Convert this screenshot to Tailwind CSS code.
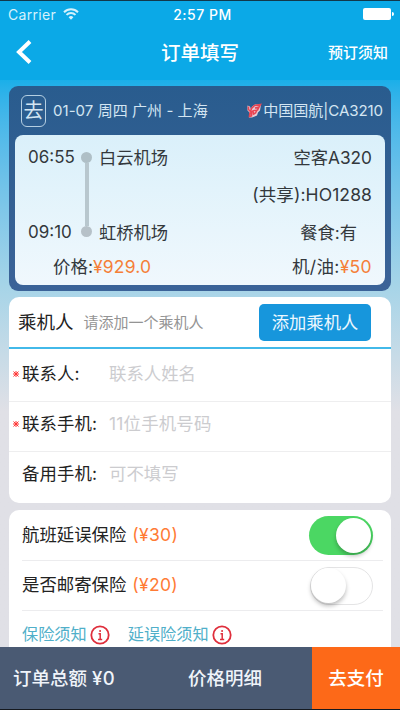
<!DOCTYPE html>
<html lang="zh-CN">
<head>
<meta charset="utf-8">
<title>订单填写</title>
<script src="https://cdn.jsdelivr.net/npm/@tailwindcss/browser@4"></script>
</head>
<body class="w-[400px] h-[710px] overflow-hidden font-['Inter','Noto_Sans_CJK_SC',sans-serif] text-[#33383c] whitespace-nowrap">
<div class="flex h-[710px] flex-col border-t border-b border-t-[#12384b] border-b-[#15191f] bg-linear-to-b from-[#18afe9] from-11% via-[#a5d4e8] via-40% to-[#e0e0e6] to-58%">
  <header class="h-[79px] shrink-0 bg-[#0ba9e7] text-white">
    <div class="grid h-[26px] grid-cols-3 items-center pl-2 pr-[6px] text-[14px]">
      <div class="flex items-center gap-[7px] text-[#d5f1fc]"><span class="tracking-[0.3px]">Carrier</span>
        <svg class="h-[12px] w-[16px]" viewBox="0 0 16 12" fill="none" stroke="currentColor" stroke-width="2"><path d="M1 4.2a10 10 0 0 1 14 0M3.5 6.9a6.4 6.4 0 0 1 9 0"/><path d="M5.6 9.2a3.5 3.5 0 0 1 4.8 0L8 11.7z" fill="currentColor" stroke="none"/></svg>
      </div>
      <div class="pl-[3px] text-center font-medium tracking-[0.5px]">2:57 PM</div>
      <div class="flex items-center justify-end gap-px"><span class="h-[12px] w-[28px] rounded-[2px] bg-white"></span><span class="h-[4px] w-[2px] rounded-r-full bg-white"></span></div>
    </div>
    <div class="grid h-[52px] grid-cols-3 items-center pl-4 pr-3">
      <svg class="-mt-[2px] h-[24px] w-[16px]" viewBox="0 0 16 24" fill="none" stroke="white" stroke-width="4"><path d="M14 1.5 3 12l11 10.500"/></svg>
      <h1 class="pr-[4px] pt-[1px] text-center text-[19.500px] font-medium">订单填写</h1>
      <span class="text-right text-[15px] font-medium">预订须知</span>
    </div>
  </header>

  <main class="min-h-0 flex-1 overflow-hidden px-[9px] pt-[6px]">
    <section class="h-[205px] rounded-[9px] bg-linear-to-b from-[#295c8e] to-[#3b6398] px-[6px]">
      <div class="flex h-[49px] items-center pl-[6px] pr-[2px] text-[15px] text-[#d3e5f2]">
        <span class="flex h-[32px] w-[25px] items-center justify-center rounded-[6px] border border-[#b5cfe2] text-[20px]">去</span>
        <span class="ml-[7px] pt-[1px] text-[15px] tracking-[0.050px]">01-07 周四 广州 - 上海</span>
        <svg class="ml-auto mr-[1px] h-[15px] w-[15px]" viewBox="0 0 15 15" fill="none"><path d="M0.500 2.500v5l2 2-.5 5h3l5-2 1-3 2-2 1-6-6 0-3 2-1 3-1-3z" fill="#e7cbd5"/><path d="M1.500 3.500v3l2 2 1-3 3-3 6-1-1.500 2.500-4 1 3.500 0-1 2-2.500.5 1.500.5-1 2-2 1-.5-3-1.500 1 0 4-2 .5.500-4" stroke="#e84553" stroke-width="1.600"/></svg>
        <span class="pt-[1px] text-[15.100px] tracking-[-0.100px]">中国国航|CA3210</span>
      </div>
      <div class="flex h-[150px] flex-col rounded-[8px] bg-linear-to-b from-[#daf0fa] to-[#f0f8fd] px-[13px] text-[17.300px]">
        <div class="flex h-[113px] pt-[7px]">
          <div class="flex h-[106px] w-[47px] flex-col justify-between text-[17px]"><span class="flex h-8 items-center">06:55</span><span class="flex h-8 items-center pt-[1px]">09:10</span></div>
          <div class="ml-[6px] mt-[10px] flex h-[85px] w-[11px] flex-col items-center"><span class="size-[11px] rounded-full bg-[#afbfc6]"></span><span class="w-1 flex-1 bg-[#b8c7ce]"></span><span class="size-[11px] rounded-full bg-[#b6c1c8]"></span></div>
          <div class="ml-[7px] flex h-[106px] flex-col justify-between"><span class="flex h-8 items-center">白云机场</span><span class="flex h-8 items-center pt-[1px]">虹桥机场</span></div>
          <div class="ml-auto flex h-[106px] flex-col items-end justify-between"><span class="flex h-8 items-center">空客A320</span><span class="flex h-8 items-center text-[17.500px] tracking-[0.100px]">(共享):HO1288</span><span class="flex h-8 items-center pr-[15px] pt-[1px]">餐食:有</span></div>
        </div>
        <div class="flex h-[37px] items-center justify-between pl-[25px] pt-[1px] text-[17.500px]"><span>价格:<b class="font-normal tracking-[0.150px] text-[#f57f38]">¥929.0</b></span><span class="tracking-[0.350px]">机/油:<b class="font-normal text-[#f57f38]">¥50</b></span></div>
      </div>
    </section>

    <section class="mt-[6px] h-[206px] rounded-[10px] bg-white text-[#222]">
      <div class="flex h-[52px] items-center border-b-2 border-[#42b9e9] pl-[9px] pr-[20px]">
        <h2 class="pt-[2px] text-[18.500px]">乘机人</h2><span class="ml-[10px] pt-[2px] text-[15px] text-[#949494]">请添加一个乘机人</span>
        <span class="ml-auto flex h-[37px] w-[112px] items-center justify-center rounded-[5px] bg-[#1796dc] pt-[1px] text-[17.300px] text-[#edf8ff]">添加乘机人</span>
      </div>
      <div class="flex h-[53px] items-center border-b border-[#eeeeef] pb-[2px] text-[17.400px]"><svg class="ml-[4px] mr-[3px] size-[6px] text-[#f33]" viewBox="0 0 6 6" stroke="currentColor" stroke-width="1"><path d="M.5 .5l5 5m0-5-5 5M3 0v6M0 3h6"/></svg><span class="w-[87px] tracking-[0.100px]">联系人:</span><span class="text-[#cccccf]">联系人姓名</span></div>
      <div class="flex h-[50px] items-center border-b border-[#eeeeef] pb-[5px] text-[17.400px]"><svg class="ml-[4px] mr-[3px] size-[6px] text-[#f33]" viewBox="0 0 6 6" stroke="currentColor" stroke-width="1"><path d="M.5 .5l5 5m0-5-5 5M3 0v6M0 3h6"/></svg><span class="w-[87px] tracking-[0.100px]">联系手机:</span><span class="tracking-[0.200px] text-[#cccccf]">11位手机号码</span></div>
      <div class="flex h-[49px] items-center pb-[5px] pl-[13px] text-[17.400px]"><span class="w-[87px] tracking-[0.100px]">备用手机:</span><span class="text-[#cccccf]">可不填写</span></div>
    </section>

    <section class="mt-[7px] h-[160px] rounded-t-[10px] bg-white pl-[13px] pr-[8px] text-[#222]">
      <div class="flex h-[51px] items-center border-b border-[#ececee] pr-[10px] text-[17.400px]"><span>航班延误保险</span><span class="ml-[6px] text-[17.500px] tracking-[0.300px] text-[#ff7b35]">(¥30)</span>
        <span class="ml-auto flex h-[39px] w-[64px] items-center justify-end rounded-full bg-[#4bd763] pr-[2px]"><span class="size-[35px] rounded-full bg-white shadow-[0_3px_4px_rgba(0,0,0,0.250)]"></span></span>
      </div>
      <div class="flex h-[50px] items-center border-b border-[#ececee] pr-[10px] text-[17.400px]"><span>是否邮寄保险</span><span class="ml-[6px] text-[17.500px] tracking-[0.300px] text-[#ff7b35]">(¥20)</span>
        <span class="ml-auto flex h-[38px] w-[63px] items-center rounded-full border-[1.500px] border-[#e4e4e5]"><span class="size-[35px] rounded-full bg-white shadow-[0_3px_4px_rgba(0,0,0,0.250)]"></span></span>
      </div>
      <div class="flex h-[47px] items-center text-[16.200px] text-[#50afc9]">
        <span>保险须知</span><svg class="ml-[3px] size-[20px]" viewBox="0 0 20 20" fill="none" stroke="#df2f3c" stroke-width="1.800"><circle cx="10" cy="10" r="8.700"/><path d="M8.500 8.700h1.700V14M8 14.500h4.200M10.100 5v2" stroke-width="1.500"/></svg>
        <span class="ml-[18px]">延误险须知</span><svg class="ml-[3px] size-[20px]" viewBox="0 0 20 20" fill="none" stroke="#df2f3c" stroke-width="1.800"><circle cx="10" cy="10" r="8.700"/><path d="M8.500 8.700h1.700V14M8 14.500h4.200M10.100 5v2" stroke-width="1.500"/></svg>
      </div>
    </section>
  </main>

  <footer class="flex h-[62px] shrink-0 items-center bg-[#4a5a73] text-[18.500px] font-medium text-[#f0f4fa]">
    <span class="w-[175px] pl-[13px] pt-[1px]">订单总额 <span class="text-[18.500px] tracking-[0.500px]">¥0</span></span><span class="w-[137px] pl-[13px] pt-[1px]">价格明细</span><span class="flex h-full w-[88px] items-center justify-center bg-[#fd6918] pt-[1px] text-white">去支付</span>
  </footer>
</div>
</body>
</html>
